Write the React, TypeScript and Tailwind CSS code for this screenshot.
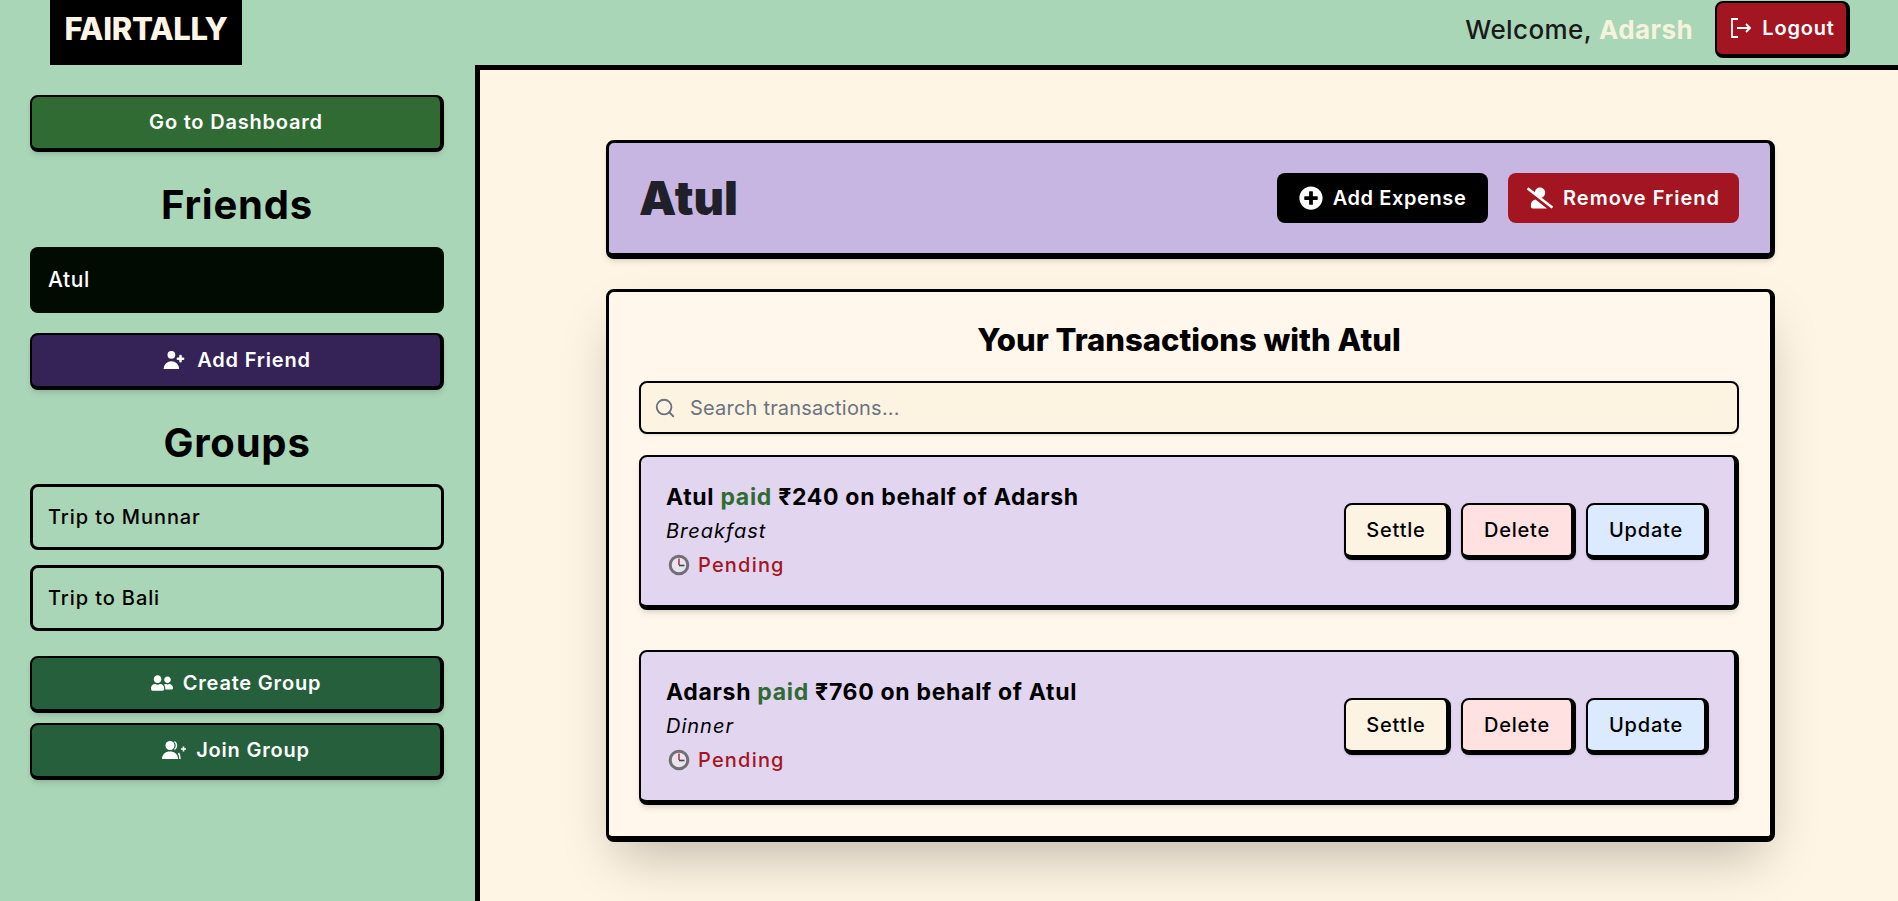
import React from 'react';
import { FaUserFriends, FaPlusCircle, FaUserSlash } from 'react-icons/fa';
import { HiUserAdd } from 'react-icons/hi';
import { Search } from 'lucide-react';

const sideBtn =
  'flex items-center justify-center gap-[10px] w-full h-[57px] pb-[2px] rounded-lg border-2 border-r-4 border-b-4 border-black text-white text-[20px] font-semibold shadow-md tracking-[0.04em]';

const actionBtn =
  'flex items-center justify-center h-[57px] rounded-lg border-2 border-r-[5px] border-b-[5px] border-black text-black text-[20px] font-medium tracking-[0.04em] shadow-sm';

const groupRow =
  'flex items-center h-[66px] px-[15px] rounded-lg border-[3px] border-black text-black text-[20px] font-medium tracking-[0.045em]';

function ClockEmoji() {
  return (
    <svg width="22" height="22" viewBox="0 0 22 22">
      <circle cx="11" cy="11" r="8.800" fill="#e9e5ec" stroke="#6f6f75" strokeWidth="3" />
      <path d="M11 11V4.500" stroke="#c0304a" strokeWidth="1.600" />
      <path d="M11 11.500h5.500" stroke="#44444c" strokeWidth="1.600" />
    </svg>
  );
}

function LogoutIcon() {
  return (
    <svg width="24" height="24" viewBox="0 0 24 24" fill="none" stroke="currentColor" strokeWidth="1.800">
      <path d="M10 3H4v18h6" />
      <path d="M9 12h13M18 8l4 4-4 4" />
    </svg>
  );
}

function JoinIcon() {
  return (
    <svg width="24" height="20" viewBox="0 0 24 20" fill="currentColor">
      <circle cx="8" cy="5.500" r="4.500" />
      <path d="M0 19c0-5 3.500-7.500 8-7.500s8 2.500 8 7.500z" />
      <path d="M12.500 1.500a5 5 0 0 1 0 8M16.500 13c1 1.500 1.500 3.500 1.500 6" fill="none" stroke="currentColor" strokeWidth="1.500" />
      <path d="M19 9h5M21.500 6.500v5" fill="none" stroke="currentColor" strokeWidth="1.600" />
    </svg>
  );
}

function Transaction({ payer, amount, other, note }: { payer: string; amount: string; other: string; note: string }) {
  return (
    <div className="flex items-center justify-between h-[155px] pl-[25px] pr-[25px] rounded-lg border-2 border-r-[5px] border-b-[5px] border-black bg-[#e1d5f0] shadow-md">
      <div className="flex flex-col">
        <p className="text-[23px] leading-[34px] font-bold text-black tracking-[0.03em] -mt-[1px]">
          {payer} <span className="text-[#306b34]">paid</span> ₹{amount} on behalf of {other}
        </p>
        <p className="text-[20px] leading-[34px] italic text-black tracking-[0.05em]">{note}</p>
        <p className="flex items-center gap-[8px] pl-[2px] text-[20px] leading-[34px] font-medium text-[#a31621] tracking-[0.06em]">
          <ClockEmoji />
          Pending
        </p>
      </div>
      <div className="flex gap-[10px] mt-[1px]">
        <button className={`${actionBtn} w-[107px] bg-[#fdf3e3]`}>Settle</button>
        <button className={`${actionBtn} w-[115px] bg-[#ffe1e1]`}>Delete</button>
        <button className={`${actionBtn} w-[123px] bg-[#dbeafe]`}>Update</button>
      </div>
    </div>
  );
}

export default function App() {
  return (
    <div className="h-screen overflow-hidden flex flex-col bg-[#a9d6b7] font-['Inter',sans-serif]">
      <header className="flex items-center justify-between h-[65px] pl-[50px] pr-[48px] shrink-0">
        <div className="flex items-center justify-center self-stretch w-[192px] bg-black text-[#fff5e4] text-[31px] font-extrabold -tracking-[0.01em] pb-[7px]">
          FAIRTALLY
        </div>
        <div className="flex items-center gap-[22px] -mt-[6px]">
          <span className="text-[26px] font-medium text-[#1a1a1a] tracking-[0.015em]">
            Welcome, <span className="font-bold text-[#f6f3dc]">Adarsh</span>
          </span>
          <button className="flex items-center justify-center gap-[10px] w-[135px] h-[57px] pb-[2px] rounded-lg border-2 border-r-4 border-b-4 border-black bg-[#a31621] text-white text-[20px] font-semibold tracking-[0.04em]">
            <LogoutIcon />
            Logout
          </button>
        </div>
      </header>
      <div className="flex flex-1 min-h-0">
        <aside className="w-[475px] shrink-0 pl-[30px] pr-[31px] pt-[30px] flex flex-col">
          <button className={`${sideBtn} bg-[#306b34]`}>Go to Dashboard</button>
          <h2 className="mt-[28px] mb-[17px] text-center text-[40px] leading-[50px] font-bold text-black tracking-[0.02em]">Friends</h2>
          <div className="flex items-center h-[66px] px-[18px] rounded-lg bg-[#010b01] text-white text-[21px] font-medium tracking-[0.03em]">
            Atul
          </div>
          <button className={`${sideBtn} mt-[20px] bg-[#352256]`}>
            <HiUserAdd className="w-[26px] h-[26px]" />
            Add Friend
          </button>
          <h2 className="mt-[28px] mb-[16px] text-center text-[40px] leading-[50px] font-bold text-black tracking-[0.02em]">Groups</h2>
          <div className={groupRow}>Trip to Munnar</div>
          <div className={`${groupRow} mt-[15px]`}>Trip to Bali</div>
          <button className={`${sideBtn} mt-[25px] bg-[#255f3c]`}>
            <FaUserFriends className="w-[22px] h-[20px]" />
            Create Group
          </button>
          <button className={`${sideBtn} mt-[10px] bg-[#255f3c]`}>
            <JoinIcon />
            Join Group
          </button>
        </aside>
        <main className="flex-1 border-l-[5px] border-t-[5px] border-black bg-[#fff5e4] pl-[126px] pr-[123px] pt-[70px]">
          <div className="flex items-center justify-between h-[119px] pl-[30px] pr-[31px] rounded-lg border-[3px] border-r-[5px] border-b-[6px] border-black bg-[#c8b6e2] shadow-md">
            <h1 className="text-[47px] font-black text-[#1f2029]">Atul</h1>
            <div className="flex gap-[20px]">
              <button className="flex items-center justify-center gap-[10px] w-[211px] h-[50px] rounded-lg bg-black text-white text-[20px] font-semibold tracking-[0.03em]">
                <FaPlusCircle className="w-[24px] h-[24px]" />
                Add Expense
              </button>
              <button className="flex items-center justify-center gap-[10px] w-[231px] h-[50px] rounded-lg bg-[#a31621] text-white text-[20px] font-semibold tracking-[0.05em]">
                <FaUserSlash className="w-[26px] h-[24px]" />
                Remove Friend
              </button>
            </div>
          </div>
          <div className="mt-[30px] h-[553px] pt-[28px] pl-[30px] pr-[31px] rounded-lg border-[3px] border-r-[5px] border-b-[6px] border-black bg-[#fff7eb] shadow-2xl">
            <h2 className="text-center text-[31px] leading-[40px] font-extrabold text-black">Your Transactions with Atul</h2>
            <div className="flex items-center gap-[14px] mt-[21px] h-[53px] px-[13px] rounded-lg border-2 border-black bg-[#fdf3e1] shadow-sm">
              <Search className="w-[22px] h-[22px] text-[#6b7280]" />
              <input
                className="flex-1 bg-transparent outline-none text-[20px] tracking-[0.01em] placeholder:text-[#6b7280]"
                placeholder="Search transactions..."
              />
            </div>
            <div className="flex flex-col gap-[40px] mt-[21px]">
              <Transaction payer="Atul" amount="240" other="Adarsh" note="Breakfast" />
              <Transaction payer="Adarsh" amount="760" other="Atul" note="Dinner" />
            </div>
          </div>
        </main>
      </div>
    </div>
  );
}
